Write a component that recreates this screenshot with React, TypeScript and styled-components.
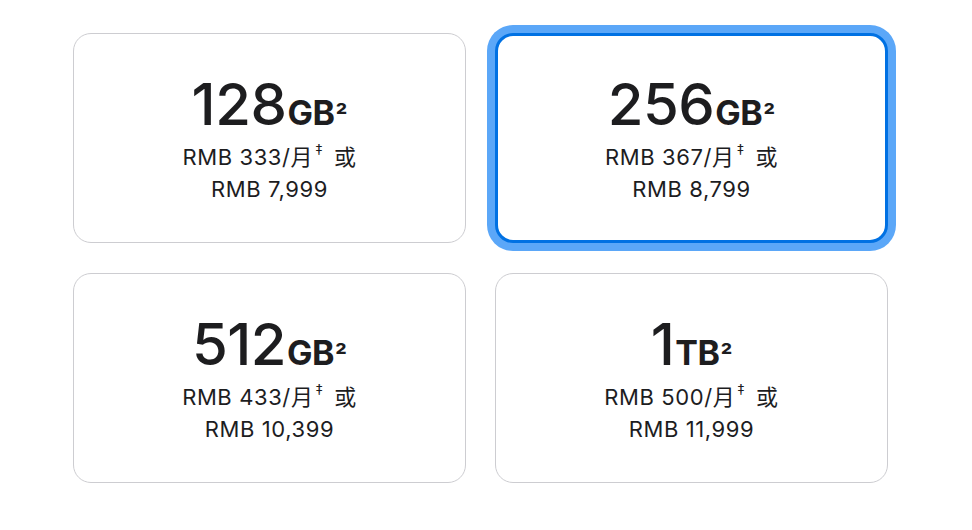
import React from "react";
import styled, { createGlobalStyle } from "styled-components";

const Global = createGlobalStyle`
  html, body { margin: 0; padding: 0; background: #ffffff; }
  body { font-family: Inter, "Noto Sans CJK SC", sans-serif; color: #1d1d1f; }
`;

const Page = styled.div`
  padding: 33px 0 0 73px;
`;

const Grid = styled.div`
  display: grid;
  grid-template-columns: 393px 393px;
  grid-auto-rows: 210px;
  column-gap: 29px;
  row-gap: 30px;
`;

const Card = styled.div<{ $selected?: boolean }>`
  box-sizing: border-box;
  border-radius: 18px;
  border: ${(p) => (p.$selected ? "3px solid #0071e3" : "1.5px solid #cdcdd1")};
  box-shadow: ${(p) => (p.$selected ? "0 0 0 8px #5ba7f8" : "none")};
  display: flex;
  flex-direction: column;
  align-items: center;
  justify-content: center;
  background: #fff;
`;

const Capacity = styled.div`
  display: flex;
  align-items: baseline;
  line-height: 1;
  margin-top: 4px;
`;

const Number = styled.span`
  font-family: Inter, sans-serif;
  font-size: 58px;
  font-weight: 500;
  letter-spacing: -0.5px;
`;

const Unit = styled.span`
  font-family: Inter, sans-serif;
  font-size: 34px;
  font-weight: 700;
  letter-spacing: -0.5px;
  margin-left: 1px;
`;

const Note = styled.sup`
  font-family: Inter, sans-serif;
  font-size: 26px;
  font-weight: 700;
  vertical-align: 12px;
  line-height: 0;
  margin-left: 1px;
`;

const Price = styled.div`
  font-family: Inter, "Noto Sans CJK SC", sans-serif;
  font-size: 22px;
  font-weight: 400;
  line-height: 32px;
  text-align: center;
  margin-top: 8px;
  letter-spacing: 0.6px;
`;

const Dagger = styled.sup`
  font-size: 15px;
  vertical-align: 10px;
  line-height: 0;
  margin-left: 2px;
  margin-right: 4px;
`;

const plans = [
  { num: "128", unit: "GB", monthly: "333", total: "7,999" },
  { num: "256", unit: "GB", monthly: "367", total: "8,799", selected: true },
  { num: "512", unit: "GB", monthly: "433", total: "10,399" },
  { num: "1", unit: "TB", monthly: "500", total: "11,999" },
];

export default function App() {
  return (
    <>
      <Global />
      <Page>
        <Grid>
          {plans.map((p) => (
            <Card key={p.num} $selected={p.selected}>
              <Capacity>
                <Number>{p.num}</Number>
                <Unit>{p.unit}</Unit>
                <Note>²</Note>
              </Capacity>
              <Price>
                RMB {p.monthly}/月<Dagger>‡</Dagger> 或
                <br />
                RMB {p.total}
              </Price>
            </Card>
          ))}
        </Grid>
      </Page>
    </>
  );
}
